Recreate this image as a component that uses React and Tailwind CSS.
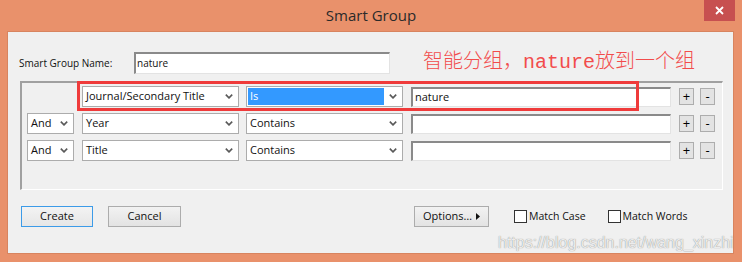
import React from "react";

const Chevron = () => (
  <svg width="8" height="5" viewBox="0 0 8 5" className="shrink-0">
    <path d="M0.8 0.6 L4 3.9 L7.2 0.6" fill="none" stroke="#5a5a5a" strokeWidth="1.6" />
  </svg>
);

function Select({ value, className, highlight }) {
  return (
    <div className={`h-[21px] bg-white border border-[#acacac] flex items-center pr-[5px] ${className}`}>
      {highlight ? (
        <div className="flex-1 h-[17px] ml-[1px] mr-[5px] bg-[#3399ff] text-white flex items-center pl-[2px]">{value}</div>
      ) : (
        <span className="flex-1 pl-[3px] text-[#111]">{value}</span>
      )}
      <Chevron />
    </div>
  );
}

function SunkenInput({ value, className }) {
  return (
    <div className={`bg-white border-t-2 border-l-2 border-[#8a8a8a] border-b border-r border-b-[#e3e3e3] border-r-[#e3e3e3] flex items-center pl-[1px] text-[#111] ${className}`}>
      {value}
    </div>
  );
}

function SmallButton({ label }) {
  return (
    <div className="w-[15px] h-[17px] bg-[#e3e3e3] border border-[#adadad] flex items-center justify-center text-[13px] leading-none text-black">
      {label}
    </div>
  );
}

const rows = [
  { join: null, field: "Journal/Secondary Title", op: "Is", text: "nature", hl: true },
  { join: "And", field: "Year", op: "Contains", text: "" },
  { join: "And", field: "Title", op: "Contains", text: "" },
];

export default function App() {
  return (
    <div className="relative w-[742px] h-[262px] bg-[#e9916b] flex flex-col font-['Open_Sans',sans-serif] overflow-hidden">
      {/* Title bar */}
      <div className="relative h-[31px] flex items-center justify-center">
        <span className="text-[15px] text-[#2a2a2a] leading-none">Smart Group</span>
        <div className="absolute top-0 right-[7px] w-[31px] h-[21px] bg-[#c75050] flex items-center justify-center">
          <svg width="9" height="9" viewBox="0 0 9 9">
            <path d="M1 1 L8 8 M8 1 L1 8" stroke="#fff" strokeWidth="1.8" />
          </svg>
        </div>
      </div>

      {/* Client area */}
      <div className="flex-1 ml-[7px] mr-[8px] mb-[8px] bg-[#f0f0f0] border border-[#d8845f] flex flex-col">
        <div className="mt-[20px] h-[22px] pl-[11px] flex items-center">
          <span className="w-[115px] text-[10px] text-[#111]">Smart Group Name:</span>
          <SunkenInput value="nature" className="w-[256px] h-[22px] text-[10px]" />
          <span className="ml-[33px] text-[20px] leading-none text-[#f24c4c] font-['Liberation_Mono','Noto_Sans_CJK_SC',monospace] font-light">
            智能分组，nature放到一个组
          </span>
        </div>

        {/* Criteria group */}
        <div className="mt-[7px] ml-[12px] w-[703px] h-[109px] border-t-2 border-l-2 border-[#a0a0a0] border-b border-r border-b-white border-r-white flex flex-col gap-[6px] pt-[3px] pl-[5px] text-[11px]">
          {rows.map((r, i) => (
            <div key={i} className="h-[21px] flex items-center">
              {r.join ? <Select value={r.join} className="w-[47px]" /> : <div className="w-[47px]" />}
              <Select value={r.field} className="w-[157px] ml-[8px]" />
              <Select value={r.op} highlight={r.hl} className="w-[157px] ml-[7px]" />
              <SunkenInput value={r.text} className="w-[260px] h-[20px] ml-[8px] pl-[2px]" />
              <div className="ml-[8px] flex gap-[6px]">
                <SmallButton label="+" />
                <SmallButton label="-" />
              </div>
            </div>
          ))}
        </div>

        {/* Buttons */}
        <div className="mt-[16px] h-[21px] pl-[13px] flex items-center text-[11px] text-[#111]">
          <div className="w-[72px] h-[21px] border border-[#3c9be8] bg-gradient-to-b from-[#f3f3f3] to-[#e6e6e6] flex items-center justify-center">Create</div>
          <div className="ml-[15px] w-[73px] h-[21px] border border-[#acacac] bg-gradient-to-b from-[#f2f2f2] to-[#e3e3e3] flex items-center justify-center">Cancel</div>
          <div className="ml-[233px] w-[75px] h-[21px] border border-[#acacac] bg-gradient-to-b from-[#f2f2f2] to-[#e3e3e3] flex items-center justify-center gap-[4px]">
            <span>Options…</span>
            <svg width="4" height="7" viewBox="0 0 4 7"><polygon points="0,0 4,3.5 0,7" fill="#111" /></svg>
          </div>
          <div className="ml-[25px] w-[13px] h-[13px] bg-white border border-[#333]" />
          <span className="ml-[2px] text-[10.5px]">Match Case</span>
          <div className="ml-[22px] w-[13px] h-[13px] bg-white border border-[#333]" />
          <span className="ml-[2px] text-[10.5px]">Match Words</span>
        </div>
      </div>

      {/* Red annotation frame */}
      <div className="absolute left-[77px] top-[81px] w-[562px] h-[30px] border-[3px] border-[#ef3b3b] pointer-events-none" />

      {/* Watermark */}
      <span className="absolute left-[498px] top-[235px] text-[16px] leading-none text-[#ececec] font-['Liberation_Sans',sans-serif] [text-shadow:0_0_1px_#7a7a7a] pointer-events-none">
        https://blog.csdn.net/wang_xinzhi
      </span>
    </div>
  );
}
